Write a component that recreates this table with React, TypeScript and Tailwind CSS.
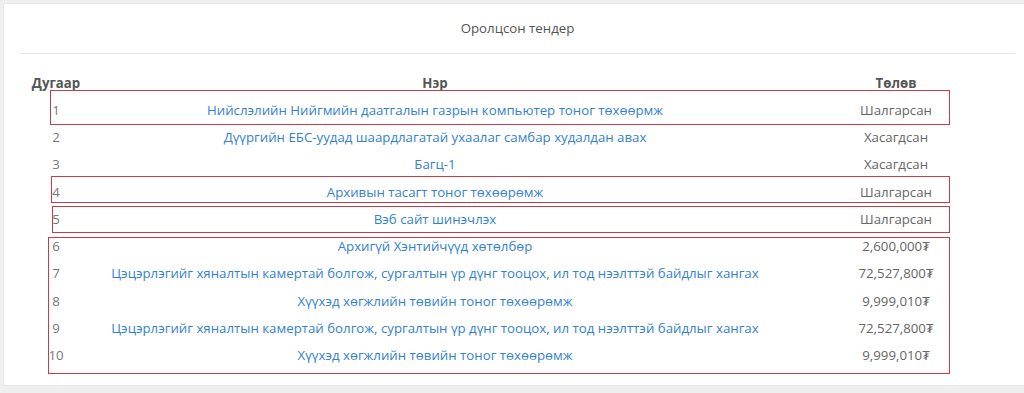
import React from "react";

const rows: { n: string; name: string; status: string }[] = [
  { n: "1", name: "Нийслэлийн Нийгмийн даатгалын газрын компьютер тоног төхөөрмж", status: "Шалгарсан" },
  { n: "2", name: "Дүүргийн ЕБС-уудад шаардлагатай ухаалаг самбар худалдан авах", status: "Хасагдсан" },
  { n: "3", name: "Багц-1", status: "Хасагдсан" },
  { n: "4", name: "Архивын тасагт тоног төхөөрөмж", status: "Шалгарсан" },
  { n: "5", name: "Вэб сайт шинэчлэх", status: "Шалгарсан" },
  { n: "6", name: "Архигүй Хэнтийчүүд хөтөлбөр", status: "2,600,000₮" },
  { n: "7", name: "Цэцэрлэгийг хяналтын камертай болгож, сургалтын үр дүнг тооцох, ил тод нээлттэй байдлыг хангах", status: "72,527,800₮" },
  { n: "8", name: "Хүүхэд хөгжлийн төвийн тоног төхөөрөмж", status: "9,999,010₮" },
  { n: "9", name: "Цэцэрлэгийг хяналтын камертай болгож, сургалтын үр дүнг тооцох, ил тод нээлттэй байдлыг хангах", status: "72,527,800₮" },
  { n: "10", name: "Хүүхэд хөгжлийн төвийн тоног төхөөрөмж", status: "9,999,010₮" },
];

export default function App() {
  return (
    <div
      className="relative w-[1024px] h-[393px] overflow-hidden bg-[#efefef] text-[13.25px]"
      style={{ fontFamily: '"Open Sans", "Noto Sans", sans-serif' }}
    >
      <div className="ml-[3px] mt-[3px] w-[1032px] h-[383px] bg-white border border-[#e8e8e8] rounded-[2px]">
        <div className="ml-[16px] w-[995px] h-[50px] border-b border-[#e5e5e5] flex items-center justify-center text-[#555]">
          Оролцсон тендер
        </div>
        <div className="pl-[18px] pt-[16px]">
          <div className="grid grid-cols-[68px_690px_232px] h-[27px] items-center font-bold text-[#555]">
            <div className="text-center">Дугаар</div>
            <div className="text-center">Нэр</div>
            <div className="text-center">Төлөв</div>
          </div>
          {rows.map((r) => (
            <div key={r.n} className="grid grid-cols-[68px_690px_232px] h-[27.3px] items-center">
              <div className="text-center text-[#777]">{r.n}</div>
              <div className="text-center text-[#3482cf] whitespace-nowrap">{r.name}</div>
              <div className="text-center text-[#666]">{r.status}</div>
            </div>
          ))}
        </div>
      </div>
      <div className="absolute left-[50px] top-[90px] w-[900px] h-[35px] border border-[#cc3b45]" />
      <div className="absolute left-[51px] top-[176px] w-[899px] h-[27px] border border-[#cc3b45]" />
      <div className="absolute left-[52px] top-[206px] w-[898px] h-[27px] border border-[#cc3b45]" />
      <div className="absolute left-[48px] top-[237px] w-[902px] h-[137px] border border-[#cc3b45]" />
    </div>
  );
}
